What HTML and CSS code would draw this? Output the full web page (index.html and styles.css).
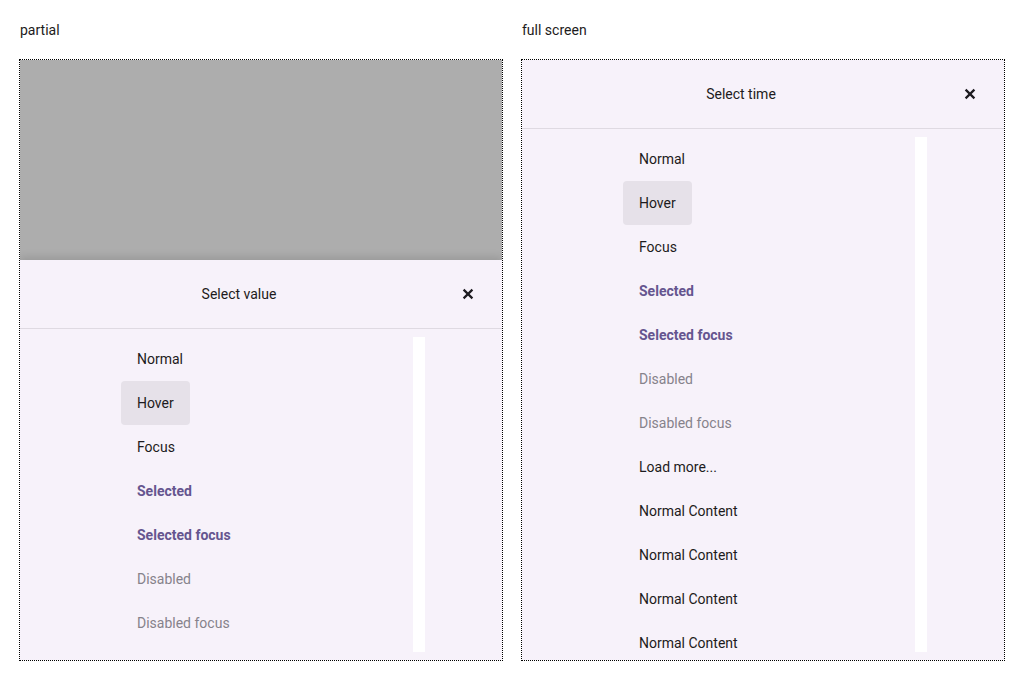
FILE: index.html
```html
<!DOCTYPE html>
<html lang="en">
<head>
<meta charset="utf-8">
<title>Select sheets</title>
<link rel="stylesheet" href="styles.css">
</head>
<body>
<div class="demos">
  <section class="demo">
    <div class="label">partial</div>
    <div class="frame">
      <div class="scrim"></div>
      <div class="sheet sheet-partial">
        <div class="header">
          <div class="title">Select value</div>
          <button class="close" aria-label="Close">
            <svg viewBox="0 0 20 20" width="20" height="20"><path d="M5.6 5.6 L14.4 14.4 M14.4 5.6 L5.6 14.4" stroke="#1d1b20" stroke-width="2.2" fill="none"/></svg>
          </button>
        </div>
        <div class="divider"></div>
        <div class="listwrap">
          <ul class="list">
            <li class="item">Normal</li>
            <li class="item hover">Hover</li>
            <li class="item">Focus</li>
            <li class="item selected">Selected</li>
            <li class="item selected">Selected focus</li>
            <li class="item disabled">Disabled</li>
            <li class="item disabled">Disabled focus</li>
          </ul>
          <div class="track"></div>
        </div>
      </div>
    </div>
  </section>
  <section class="demo">
    <div class="label">full screen</div>
    <div class="frame">
      <div class="sheet sheet-full">
        <div class="header">
          <div class="title">Select time</div>
          <button class="close" aria-label="Close">
            <svg viewBox="0 0 20 20" width="20" height="20"><path d="M5.6 5.6 L14.4 14.4 M14.4 5.6 L5.6 14.4" stroke="#1d1b20" stroke-width="2.2" fill="none"/></svg>
          </button>
        </div>
        <div class="divider"></div>
        <div class="listwrap">
          <ul class="list">
            <li class="item">Normal</li>
            <li class="item hover">Hover</li>
            <li class="item">Focus</li>
            <li class="item selected">Selected</li>
            <li class="item selected">Selected focus</li>
            <li class="item disabled">Disabled</li>
            <li class="item disabled">Disabled focus</li>
            <li class="item">Load more...</li>
            <li class="item">Normal Content</li>
            <li class="item">Normal Content</li>
            <li class="item">Normal Content</li>
            <li class="item">Normal Content</li>
          </ul>
          <div class="track"></div>
        </div>
      </div>
    </div>
  </section>
</div>
</body>
</html>
```

FILE: styles.css
```css
* { box-sizing: border-box; }
html, body { margin: 0; background: #ffffff; }
body {
  font-family: Roboto, "Noto Sans", sans-serif;
  font-size: 14px;
  color: #1d1b20;
  padding: 20px 19px;
}
.demos {
  display: grid;
  grid-template-columns: 484px 484px;
  column-gap: 18px;
}
.label {
  height: 20px;
  line-height: 20px;
  padding-left: 1px;
  margin-bottom: 19px;
}
.frame {
  height: 602px;
  border: 1px dotted #000;
  display: flex;
  flex-direction: column;
  overflow: hidden;
}
.scrim {
  height: 200px;
  flex: none;
  background: #adadad;
}
.sheet {
  flex: 1;
  min-height: 0;
  background: #f7f2fa;
  display: flex;
  flex-direction: column;
  box-shadow: 0 -3px 8px rgba(0, 0, 0, 0.12);
}
.header {
  height: 68px;
  flex: none;
  display: flex;
  align-items: center;
  padding-right: 24px;
}
.title {
  flex: 1;
  text-align: center;
  line-height: 20px;
}
.close {
  width: 20px;
  height: 20px;
  padding: 0;
  margin: 0;
  border: 0;
  background: transparent;
  display: flex;
}
.divider {
  height: 1px;
  flex: none;
  background: #dfdae2;
}
.listwrap {
  flex: 1;
  min-height: 0;
  display: flex;
  padding: 8px 77px 8px 101px;
}
.list {
  flex: 1;
  margin: 0;
  padding: 0;
  list-style: none;
  overflow: hidden;
}
.track {
  width: 12px;
  flex: none;
  background: #ffffff;
}
.item {
  width: fit-content;
  height: 44px;
  line-height: 44px;
  padding: 0 16px;
  border-radius: 4px;
  white-space: nowrap;
}
.item.hover { background: #e6e1e9; }
.item.selected { color: #65558f; font-weight: 700; }
.item.disabled { color: #86828b; }
```
